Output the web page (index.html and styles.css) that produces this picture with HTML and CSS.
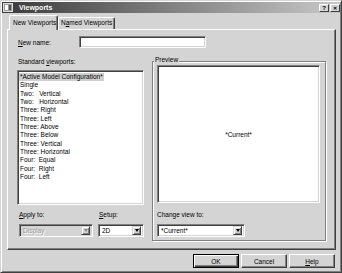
FILE: index.html
```html
<!DOCTYPE html>
<html lang="en">
<head>
    <meta charset="UTF-8">
    <title>Viewports</title>
    <link rel="stylesheet" href="styles.css">
</head>
<body>

<div class="window">
    <div class="titlebar">
        <svg class="app-icon" width="10" height="9" viewBox="0 0 10 9">
            <rect x="0.5" y="0.5" width="9" height="8" fill="#9a9a9a" stroke="#e0e0e0"/>
            <rect x="2" y="2" width="3" height="5" fill="#ffffff"/>
            <path d="M6 2h2v5H6z" fill="#505050"/>
        </svg>
        <span class="title">Viewports</span>
        <span class="caption-btns">
            <span class="cap-btn">?</span>
            <span class="cap-btn close">&#x2715;</span>
        </span>
    </div>

    <div class="dlg-body">
        <div class="tabs">
            <div class="tab active">New Viewports</div>
            <div class="tab">N<u>a</u>med Viewports</div>
        </div>

        <div class="panel">
            <div class="name-row">
                <label class="name-label"><u>N</u>ew name:</label>
                <div class="field name-field"></div>
            </div>

            <div class="columns">
                <div class="left-col">
                    <div class="label">Standard <u>v</u>iewports:</div>
                    <div class="listbox">
                        <div class="item"><span class="selected">*Active Model Configuration*</span></div>
                        <div class="item">Single</div>
                        <div class="item">Two:&nbsp;&nbsp;&nbsp;Vertical</div>
                        <div class="item">Two:&nbsp;&nbsp;&nbsp;Horizontal</div>
                        <div class="item">Three: Right</div>
                        <div class="item">Three: Left</div>
                        <div class="item">Three: Above</div>
                        <div class="item">Three: Below</div>
                        <div class="item">Three: Vertical</div>
                        <div class="item">Three: Horizontal</div>
                        <div class="item">Four:&nbsp;&nbsp;Equal</div>
                        <div class="item">Four:&nbsp;&nbsp;Right</div>
                        <div class="item">Four:&nbsp;&nbsp;Left</div>
                    </div>

                    <div class="combo-row">
                        <div class="combo-group apply">
                            <div class="label"><u>A</u>pply to:</div>
                            <div class="combo disabled">
                                <span class="combo-text">Display</span>
                                <span class="drop-btn"><span class="arrow"></span></span>
                            </div>
                        </div>
                        <div class="combo-group setup">
                            <div class="label"><u>S</u>etup:</div>
                            <div class="combo">
                                <span class="combo-text">2D</span>
                                <span class="drop-btn"><span class="arrow"></span></span>
                            </div>
                        </div>
                    </div>
                </div>

                <div class="group">
                    <div class="legend">Preview</div>
                    <div class="preview-box">*Current*</div>
                    <div class="label">Change view to:</div>
                    <div class="combo view-combo">
                        <span class="combo-text">*Current*</span>
                        <span class="drop-btn"><span class="arrow"></span></span>
                    </div>
                </div>
            </div>
        </div>

        <div class="buttons">
            <button class="btn default">OK</button>
            <button class="btn">Cancel</button>
            <button class="btn"><u>H</u>elp</button>
        </div>
    </div>
</div>

</body>
</html>
```

FILE: styles.css
```css
* {
    box-sizing: border-box;
}

body {
    margin: 0;
    background-color: #d4d4d4;
    font-family: "Liberation Sans", Arial, sans-serif;
    font-size: 6.5px;
    color: #000;
}

u {
    text-decoration: underline;
    text-underline-offset: 1px;
}

.window {
    width: 342px;
    height: 273px;
    padding: 1px;
    border: 1px solid;
    border-color: #d4d4d4 #404040 #404040 #d4d4d4;
    box-shadow: inset 1px 1px #fff, inset -1px -1px #808080;
    display: flex;
    flex-direction: column;
}

/* title bar */
.titlebar {
    height: 11px;
    display: flex;
    align-items: center;
    background: linear-gradient(to right, #3a3a3a, #c8c8c8);
}

.app-icon {
    margin-left: 1px;
    flex: none;
}

.title {
    margin-left: 6px;
    color: #fff;
    font-weight: bold;
    font-size: 7px;
}

.caption-btns {
    margin-left: auto;
    display: flex;
    gap: 1px;
}

.cap-btn {
    width: 10px;
    height: 8px;
    background-color: #d4d4d4;
    border: 1px solid;
    border-color: #fff #404040 #404040 #fff;
    font-size: 6px;
    font-weight: bold;
    line-height: 6px;
    text-align: center;
}

.cap-btn.close {
    font-size: 5px;
}

/* dialog body */
.dlg-body {
    flex: 1;
    padding: 2px 4px 0 5px;
    display: flex;
    flex-direction: column;
}

.tabs {
    height: 14px;
    padding-left: 2px;
    display: flex;
    align-items: flex-end;
}

.tab {
    height: 12px;
    padding: 0 3px;
    border: 1px solid;
    border-bottom: none;
    border-color: #fff #404040 #404040 #fff;
    border-radius: 2px 2px 0 0;
    box-shadow: inset -1px 0 #808080;
    line-height: 10px;
    white-space: nowrap;
    flex: none;
}

.tab.active {
    position: relative;
    z-index: 1;
    height: 15px;
    width: 49px;
    margin-bottom: -1px;
    background-color: #d4d4d4;
    line-height: 13px;
}

.tab:not(.active) {
    width: 57px;
    padding-left: 2px;
}

.panel {
    height: 221px;
    padding: 6px 0 0 9px;
    border: 1px solid;
    border-color: #fff #404040 #404040 #fff;
    box-shadow: inset -1px -1px #808080;
}

.name-row {
    display: flex;
    align-items: center;
    height: 12px;
}

.name-label {
    width: 62px;
    padding-left: 1px;
}

.field {
    border: 1px solid;
    border-color: #808080 #fff #fff #808080;
    box-shadow: inset 1px 1px #404040, inset -1px -1px #d4d4d4;
    background-color: #fff;
}

.name-field {
    width: 127px;
    height: 12px;
}

.columns {
    margin-top: 8px;
    display: flex;
    gap: 8px;
}

.left-col {
    width: 127px;
}

.label {
    line-height: 11px;
    padding-left: 1px;
}

.listbox {
    margin-top: 3px;
    height: 135px;
    padding: 2px 1px;
    border: 1px solid;
    border-color: #808080 #fff #fff #808080;
    box-shadow: inset 1px 1px #404040, inset -1px -1px #d4d4d4;
    background-color: #fff;
}

.item {
    line-height: 8.33px;
    white-space: nowrap;
    padding-left: 1px;
}

.selected {
    display: inline-block;
    margin-left: -1px;
    padding: 0 1px;
    background-color: #cfcfcf;
}

.combo-row {
    margin-top: 4px;
    display: flex;
    gap: 5px;
}

.combo-group.apply {
    width: 74px;
    margin-left: 2px;
}

.combo-group.apply .label {
    padding-left: 0;
}

.combo-group.setup {
    width: 46px;
}

.combo {
    margin-top: 4px;
    height: 13px;
    display: flex;
    align-items: center;
    padding: 2px;
    border: 1px solid;
    border-color: #808080 #fff #fff #808080;
    box-shadow: inset 1px 1px #404040, inset -1px -1px #d4d4d4;
    background-color: #fff;
}

.combo-text {
    flex: 1;
    padding-left: 1px;
}

.drop-btn {
    width: 9px;
    height: 9px;
    background-color: #d4d4d4;
    border: 1px solid;
    border-color: #d4d4d4 #404040 #404040 #d4d4d4;
    box-shadow: inset 1px 1px #fff, inset -1px -1px #808080;
    display: flex;
    align-items: center;
    justify-content: center;
}

.arrow {
    width: 0;
    height: 0;
    border-left: 2.5px solid transparent;
    border-right: 2.5px solid transparent;
    border-top: 3px solid #000;
}

.combo.disabled {
    background-color: #d4d4d4;
}

.combo.disabled .combo-text {
    color: #9a9a9a;
    text-shadow: 1px 1px #fff;
}

.combo.disabled .arrow {
    border-top-color: #8a8a8a;
}

/* preview group */
.group {
    width: 174px;
    height: 180px;
    margin-top: 5px;
    padding: 0 5px 0 4px;
    border: 1px solid #808080;
    box-shadow: 1px 1px #fff, inset 1px 1px #fff;
}

.legend {
    width: fit-content;
    margin: -6px 0 0 -3px;
    padding: 0 1px;
    line-height: 8px;
    background-color: #d4d4d4;
}

.preview-box {
    margin-top: 1px;
    height: 138px;
    border: 1px solid;
    border-color: #808080 #fff #fff #808080;
    box-shadow: inset 1px 1px #404040, inset -1px -1px #d4d4d4;
    background-color: #fff;
    display: flex;
    align-items: center;
    justify-content: center;
}

.preview-box + .label {
    margin-top: 6px;
    padding-left: 0;
}

.view-combo {
    width: 88px;
}

/* buttons */
.buttons {
    padding-top: 4px;
    padding-right: 1px;
    display: flex;
    justify-content: flex-end;
    gap: 2px;
}

.btn {
    width: 46px;
    height: 14px;
    padding: 0;
    font-family: inherit;
    font-size: 6.5px;
    color: #000;
    background-color: #d4d4d4;
    border: 1px solid;
    border-color: #fff #404040 #404040 #fff;
    box-shadow: inset -1px -1px #808080;
}

.btn.default {
    border-color: #000;
    box-shadow: inset 1px 1px #fff, inset -1px -1px #404040, inset -2px -2px #808080;
}
```
